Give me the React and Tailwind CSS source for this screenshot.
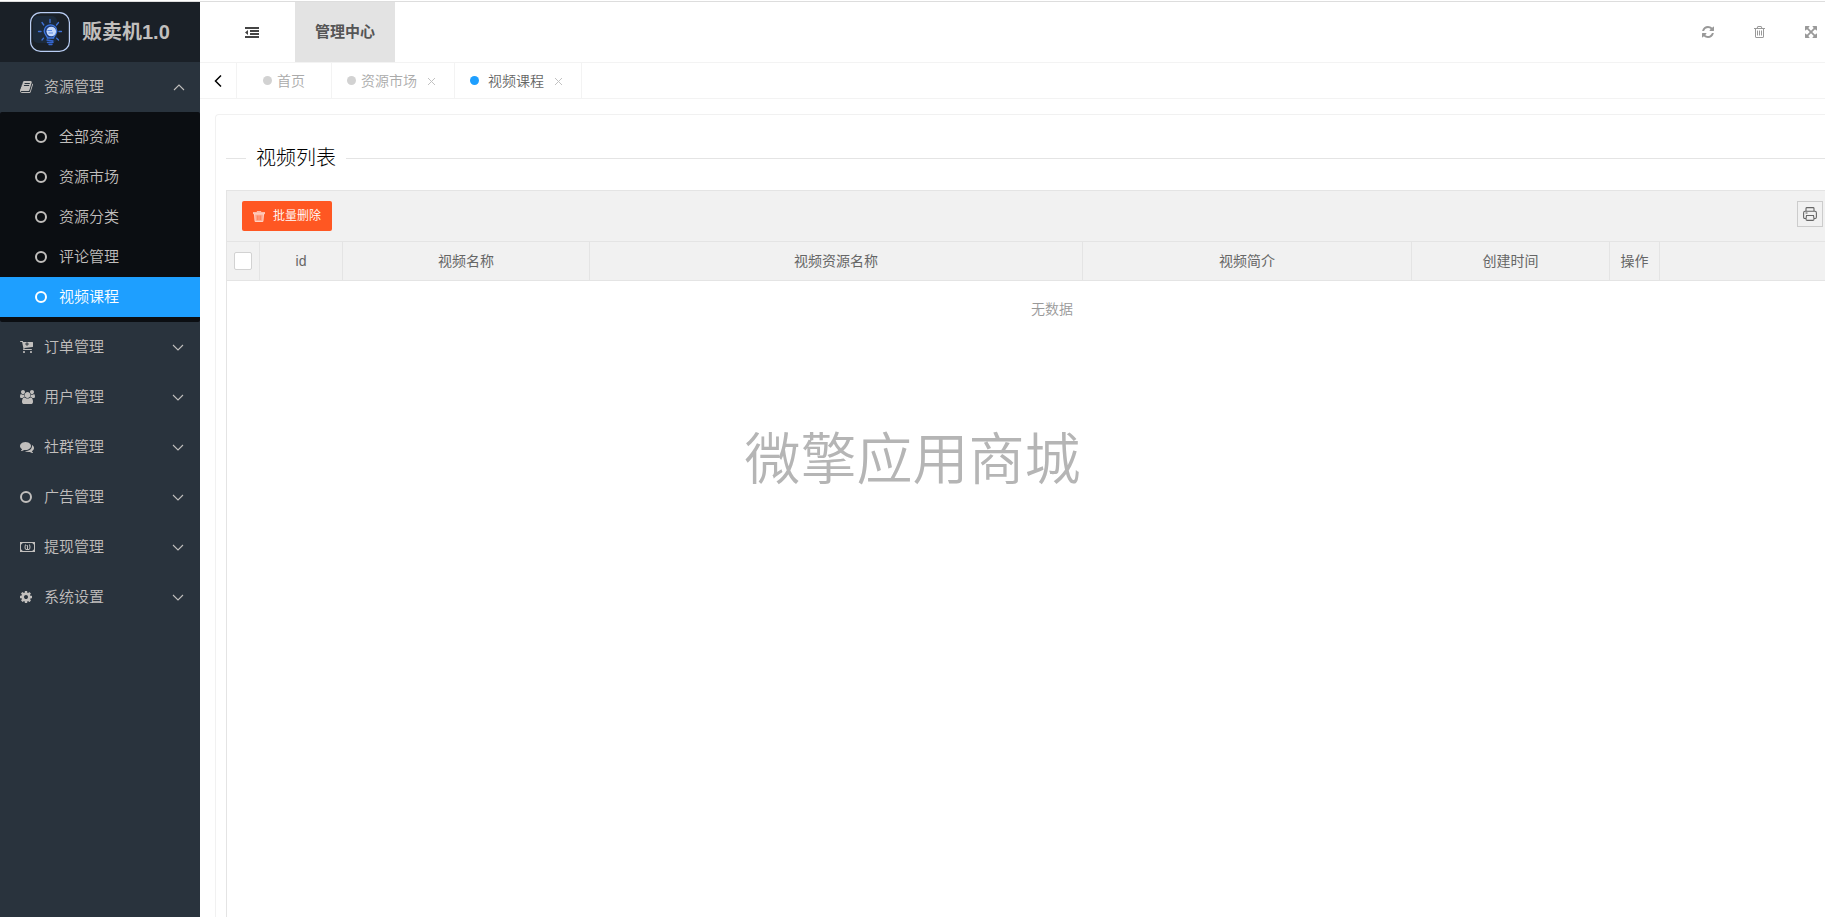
import React, { useState } from 'react';
import clsx from 'clsx';

const paths = {
  book: 'M1703 478q40 57 18 129l-275 906q-19 64-76.5 107.5t-122.5 43.5h-923q-77 0-148.5-53.5t-99.5-131.5q-24-67-2-127 0-4 3-27t4-37q1-8-3-21.5t-3-19.5q2-11 8-21t16.5-23.5 16.5-23.5q23-38 45-91.5t30-91.5q3-10 .5-30t-.5-28q3-11 17-28t17-23q21-36 42-92t25-90q1-9-2.5-32t.5-28q4-13 22-30.5t22-22.5q19-26 42.5-84.5t27.5-96.5q1-8-3-25.5t-2-26.5q2-8 9-18t18-23 17-21q8-12 16.5-30.5t15-35 16-36 19.5-32 26.5-23.5 36-11.5 47.5 5.5l-1 3q38-9 51-9h761q74 0 114 56t18 130l-274 906q-36 119-71.5 153.5t-128.5 34.5h-869q-27 0-38 15-11 16-1 43 24 70 144 70h923q29 0 56-15.5t35-41.5l300-987q7-22 5-57 38 15 59 43zm-1064 2q-4 13 2 22.5t20 9.5h608q13 0 25.5-9.5t16.5-22.5l21-64q4-13-2-22.5t-20-9.5h-608q-13 0-25.5 9.5t-16.5 22.5zm-83 256q-4 13 2 22.5t20 9.5h608q13 0 25.5-9.5t16.5-22.5l21-64q4-13-2-22.5t-20-9.5h-608q-13 0-25.5 9.5t-16.5 22.5z',
  cart: 'M1216 576q0-26-19-45t-45-19h-128v-128q0-26-19-45t-45-19-45 19-19 45v128h-128q-26 0-45 19t-19 45 19 45 45 19h128v128q0 26 19 45t45 19 45-19 19-45v-128h128q26 0 45-19t19-45zm-512 1024q0 53-37.5 90.5t-90.5 37.5-90.5-37.5-37.5-90.5 37.5-90.5 90.5-37.5 90.5 37.5 37.5 90.5zm896 0q0 53-37.5 90.5t-90.5 37.5-90.5-37.5-37.5-90.5 37.5-90.5 90.5-37.5 90.5 37.5 37.5 90.5zm128-1216v512q0 24-16 42.5t-41 21.5l-1044 122q1 7 4.5 21.5t6 26.5 2.5 22q0 16-24 64h920q26 0 45 19t19 45-19 45-45 19h-1024q-26 0-45-19t-19-45q0-14 11-39.5t29.5-59.5 20.5-38l-177-823h-204q-26 0-45-19t-19-45 19-45 45-19h256q16 0 28.5 6.5t20 15.5 13 24.5 7.5 26.5 5.5 29.5 4.5 25.5h1201q26 0 45 19t19 45z',
  users: 'M657 896q-162 5-265 128h-134q-82 0-138-40.5t-56-118.5q0-353 124-353 6 0 43.5 21t97.5 42.5 119 21.5q67 0 133-23-5 37-5 66 0 139 81 256zm1071 637q0 120-73 189.5t-194 69.5h-874q-121 0-194-69.5t-73-189.5q0-53 3.5-103.5t14-109 26.5-108.5 43-97.5 62-81 85.5-53.5 111.5-20q10 0 43 21.5t73 48 107 48 135 21.5 135-21.5 107-48 73-48 43-21.5q61 0 111.5 20t85.5 53.5 62 81 43 97.5 26.5 108.5 14 109 3.5 103.5zm-1024-1277q0 106-75 181t-181 75-181-75-75-181 75-181 181-75 181 75 75 181zm704 384q0 159-112.5 271.5t-271.5 112.5-271.5-112.5-112.5-271.5 112.5-271.5 271.5-112.5 271.5 112.5 112.5 271.5zm576 225q0 78-56 118.5t-138 40.5h-134q-103-123-265-128 81-117 81-256 0-29-5-66 66 23 133 23 59 0 119-21.5t97.5-42.5 43.5-21q124 0 124 353zm-128-609q0 106-75 181t-181 75-181-75-75-181 75-181 181-75 181 75 75 181z',
  comments: 'M1408 768q0 139-94 257t-256.5 186.5-353.5 68.5q-86 0-176-16-124 88-278 128-36 9-86 16h-3q-11 0-20.5-8t-11.5-21q-1-3-1-6.5t.5-6.5 2-6l2.5-5 3.5-5.5 4-5 4.5-5 4-4.5q5-6 23-25t26-29.5 22.5-29 25-38.5 20.5-44q-124-72-195-177t-71-224q0-139 94-257t256.5-186.5 353.5-68.5 353.5 68.5 256.5 186.5 94 257zm384 256q0 120-71 224.5t-195 176.5q10 24 20.5 44t25 38.5 22.5 29 26 29.5 23 25q1 1 4 4.5t4.5 5 4 5 3.5 5.5l2.5 5 2 6 .5 6.5-1 6.5q-3 14-13 22t-22 7q-50-7-86-16-154-40-278-128-90 16-176 16-271 0-472-132 58 4 88 4 161 0 309-45t264-129q125-92 192-212t67-254q0-77-23-152 129 71 204 178t75 230z',
  cog: 'M1152 896q0-106-75-181t-181-75-181 75-75 181 75 181 181 75 181-75 75-181zm512-109v222q0 12-8 23t-20 13l-185 28q-19 54-39 91 35 50 107 138 10 12 10 25t-9 23q-27 37-99 108t-94 71q-12 0-26-9l-138-108q-44 23-91 38-16 136-29 186-7 28-36 28h-222q-14 0-24.5-8.5t-11.5-21.5l-28-184q-49-16-90-37l-141 107q-10 9-25 9-14 0-25-11-126-114-165-168-7-10-7-23 0-12 8-23 15-21 51-66.5t54-70.5q-27-50-41-99l-183-27q-13-2-21-12.5t-8-23.5v-222q0-12 8-23t19-13l186-28q14-46 39-92-40-57-107-138-10-12-10-24 0-10 9-23 26-36 98.5-107.5t94.5-71.5q13 0 26 10l138 107q44-23 91-38 16-136 29-186 7-28 36-28h222q14 0 24.5 8.5t11.5 21.5l28 184q49 16 90 37l142-107q9-9 24-9 13 0 25 10 129 119 165 170 7 8 7 22 0 12-8 23-15 21-51 66.5t-54 70.5q26 50 41 98l183 28q13 2 21 12.5t8 23.5z',
  refresh: 'M1639 1056q0 5-1 7-64 268-268 434.5t-478 166.5q-146 0-282.5-55t-243.5-157l-129 129q-19 19-45 19t-45-19-19-45v-448q0-26 19-45t45-19h448q26 0 45 19t19 45-19 45l-137 137q71 66 161 102t187 36q134 0 250-65t186-179q11-17 53-117 8-23 30-23h192q13 0 22.5 9.5t9.5 22.5zm25-800v448q0 26-19 45t-45 19h-448q-26 0-45-19t-19-45 19-45l138-138q-148-137-349-137-134 0-250 65t-186 179q-11 17-53 117-8 23-30 23h-199q-13 0-22.5-9.5t-9.5-22.5v-7q65-268 270-434.5t480-166.5q146 0 284 55.5t245 156.5l130-129q19-19 45-19t45 19 19 45z',
  trash: 'M704 736v576q0 14-9 23t-23 9h-64q-14 0-23-9t-9-23v-576q0-14 9-23t23-9h64q14 0 23 9t9 23zm256 0v576q0 14-9 23t-23 9h-64q-14 0-23-9t-9-23v-576q0-14 9-23t23-9h64q14 0 23 9t9 23zm256 0v576q0 14-9 23t-23 9h-64q-14 0-23-9t-9-23v-576q0-14 9-23t23-9h64q14 0 23 9t9 23zm128 724v-948h-896v948q0 22 7 40.5t14.5 27 10.5 8.5h832q3 0 10.5-8.5t14.5-27 7-40.5zm-672-1076h448l-48-117q-7-9-17-11h-317q-10 2-17 11zm928 32v64q0 14-9 23t-23 9h-96v948q0 83-47 143.5t-113 60.5h-832q-66 0-113-58.5t-47-141.5v-952h-96q-14 0-23-9t-9-23v-64q0-14 9-23t23-9h309l70-167q15-37 54-63t79-26h320q40 0 79 26t54 63l70 167h309q14 0 23 9t9 23z',
  expand: 'M1411 541l-355 355 355 355 144-144q29-31 70-14 39 17 39 59v448q0 26-19 45t-45 19h-448q-42 0-59-40-17-39 14-69l144-144-355-355-355 355 144 144q31 30 14 69-17 40-59 40h-448q-26 0-45-19t-19-45v-448q0-42 40-59 39-17 69 14l144 144 355-355-355-355-144 144q-19 19-45 19-12 0-24-5-40-17-40-59v-448q0-26 19-45t45-19h448q42 0 59 40 17 39-14 69l-144 144 355 355 355-355-144-144q-31-30-14-69 17-40 59-40h448q26 0 45 19t19 45v448q0 42-39 59-13 5-25 5-26 0-45-19z',
};

// viewBox trims the side bearings so the glyph fills its box
const Glyph = ({ name, viewBox = '128 128 1536 1536', className }) => (
  <svg viewBox={viewBox} className={className} fill="currentColor" fillRule="evenodd" aria-hidden="true">
    <path d={paths[name]} />
  </svg>
);

const Ring = ({ className = 'w-3 h-3' }) => (
  <svg viewBox="0 0 12 12" className={className} fill="none" stroke="currentColor" strokeWidth="2" aria-hidden="true">
    <circle cx="6" cy="6" r="5" />
  </svg>
);

const Money = () => (
  <svg viewBox="0 0 15 10" className="w-[15px] h-[10px]" fill="none" stroke="currentColor" aria-hidden="true">
    <rect x="0.5" y="0.5" width="14" height="9" />
    <path d="M1 1h1.800L1 2.800zM14 1v1.800L12.200 1zM1 9V7.200L2.800 9zM14 9h-1.800L14 7.200z" fill="currentColor" stroke="none" />
    <path d="M5.500 2.500Q4.500 5 5.500 7.500M9.500 2.500Q10.500 5 9.500 7.500" />
    <path d="M6.500 3.500h1V7M6 7.500h3" />
  </svg>
);

const Arrow = ({ up }) => (
  <svg viewBox="0 0 12 7" className="w-3 h-[7px]" fill="none" stroke="currentColor" strokeWidth="1.1" aria-hidden="true">
    <path d={up ? 'M1 6l5-5 5 5' : 'M1 1l5 5 5-5'} />
  </svg>
);

const Logo = () => (
  <svg viewBox="0 0 40 40" className="w-10 h-10" fill="none" aria-hidden="true">
    <rect x="3" y="4" width="24" height="27" rx="5" fill="#1c2a3b" />
    <rect x="0.6" y="0.6" width="38.8" height="38.8" rx="10" stroke="#b9cdf3" strokeWidth="1.2" />
    <g stroke="#3f72d8" strokeWidth="1.3" strokeLinecap="round">
      <path d="M20 7.500v3M12 10.500l1.800 2.500M28.500 10.500l-2 2.500M8.500 19.500h2.500M29 19.500h2.500M12 28l1.500-1.800M28.500 28l-1.800-1.800" />
    </g>
    <path d="M17.500 26c0-2-3.300-3.200-3.300-6.900a6.300 6.300 0 0 1 12.600 0c0 3.700-3.300 4.900-3.300 6.900z" fill="#1d3a78" stroke="#3f78e0" strokeWidth="1.3" />
    <circle cx="21.300" cy="19.500" r="4.800" fill="#c3d8fb" />
    <path d="M17.500 18.500h4.500M18.500 21h4.500" stroke="#5d8ae6" />
    <path d="M17 28l6 1M17.500 30.500h5.500M19 32.500h3" stroke="#3566cf" strokeWidth="1.4" strokeLinecap="round" />
  </svg>
);

const Outdent = () => (
  <svg viewBox="0 0 14 11" className="w-[14px] h-[11px]" fill="currentColor" aria-hidden="true">
    <path d="M0 0h14v2H0zM5 3h9v2H5zM5 6h9v2H5zM0 9h14v2H0zM3 3v5L0 5.500z" />
  </svg>
);

const Printer = () => (
  <svg viewBox="0 0 14 14" className="w-[14px] h-[14px]" fill="none" stroke="currentColor" strokeWidth="1.1" aria-hidden="true">
    <path d="M3 4V1.500Q3 .6 4 .6h6q1 0 1 .9V4M3 11.500H1.800Q.6 11.500.6 10V6Q.6 4.200 2 4.200h10q1.400 0 1.400 1.800v4q0 1.500-1.200 1.500H11" />
    <path d="M3.500 8.500h7L11 12q0 1.400-1.200 1.400H4.200Q3 13.400 3 12z" />
    <path d="M2.500 6h2" />
  </svg>
);

const TrashFill = () => (
  <svg viewBox="0 0 12 11" className="w-3 h-[11px]" fill="none" aria-hidden="true">
    <path d="M4 1V.5h4V1M0 1.500h12v1.300H0z" fill="#ffd3c5" stroke="#ffd3c5" strokeWidth="0.6" />
    <path d="M1.500 3h9l-.6 7.500H2.100z" fill="#ffab91" stroke="#ffd3c5" />
    <path d="M4.300 4.500v4.500M6 4.500v4.500M7.700 4.500v4.500" stroke="#ff6c3e" strokeWidth="0.7" />
  </svg>
);

const Close = () => (
  <svg viewBox="0 0 9 9" className="w-[9px] h-[9px]" fill="none" stroke="currentColor" aria-hidden="true">
    <path d="M1 1l7 7M8 1L1 8" />
  </svg>
);

const subItems = ['全部资源', '资源市场', '资源分类', '评论管理', '视频课程'];

const menus = [
  { name: '订单管理', icon: <Glyph name="cart" viewBox="64 192 1664 1536" className="w-[13px] h-3" /> },
  { name: '用户管理', icon: <Glyph name="users" viewBox="64 0 1920 1792" className="w-[15px] h-[14px]" /> },
  { name: '社群管理', icon: <Glyph name="comments" viewBox="0 256 1792 1408" className="w-[14px] h-[11px]" /> },
  { name: '广告管理', icon: <Ring /> },
  { name: '提现管理', icon: <Money /> },
  { name: '系统设置', icon: <Glyph name="cog" className="w-3 h-3" /> },
];

const columns = ['id', '视频名称', '视频资源名称', '视频简介', '创建时间', '操作'];

const Sidebar = () => {
  const [active, setActive] = useState('视频课程');

  return (
    <aside className="w-[200px] shrink-0 bg-[#29333d] text-[#c1bfbd] text-[15px]">
      <a href="#home" className="flex items-center h-[60px] pl-[30px] gap-3 bg-[#1a2027]">
        <Logo />
        <span className="text-[20px] font-bold">贩卖机1.0</span>
      </a>
      <nav>
        <button className="flex items-center w-full h-[50px] pl-5 pr-[15px]">
          <span className="w-6">
            <Glyph name="book" viewBox="64 128 1664 1536" className="w-[13px] h-3" />
          </span>
          <span className="flex-1 text-left">资源管理</span>
          <Arrow up />
        </button>
        <ul className="py-[5px] bg-[#0b0e12] rounded-xs">
          {subItems.map((item) => (
            <li key={item}>
              <a
                href="#video"
                onClick={() => setActive(item)}
                className={clsx(
                  'flex items-center h-10 pl-[35px] gap-3',
                  active === item && 'bg-[#1e9fff] text-white'
                )}
              >
                <Ring />
                {item}
              </a>
            </li>
          ))}
        </ul>
        {menus.map((menu) => (
          <button key={menu.name} className="flex items-center w-full h-[50px] pl-5 pr-4">
            <span className="w-6">{menu.icon}</span>
            <span className="flex-1 text-left">{menu.name}</span>
            <Arrow />
          </button>
        ))}
      </nav>
    </aside>
  );
};

const Header = () => (
  <header className="flex items-center h-[60px] text-[#999]">
    <button className="flex items-center justify-center w-[95px] h-full pl-2 text-[#444]" aria-label="收起菜单">
      <Outdent />
    </button>
    <a href="#center" className="flex items-center justify-center w-[100px] h-full bg-[#e3e3e3] text-[#555] text-[15px] font-bold">
      管理中心
    </a>
    <div className="flex items-center gap-10 ml-auto pr-2">
      <button aria-label="刷新"><Glyph name="refresh" className="w-3 h-3" /></button>
      <button aria-label="清除缓存"><Glyph name="trash" viewBox="192 128 1408 1536" className="w-[11px] h-3" /></button>
      <button aria-label="全屏"><Glyph name="expand" className="w-3 h-3" /></button>
    </div>
  </header>
);

const Tabs = () => (
  <div className="flex h-[37px] border-y border-[#f3f3f3] text-sm text-[#aaa]">
    <button className="flex items-center justify-center w-[37px] border-r border-[#f3f3f3] text-black" aria-label="向左">
      <svg viewBox="0 0 8 12" className="w-2 h-3" fill="none" stroke="currentColor" strokeWidth="1.5">
        <path d="M7 .5L1.500 6 7 11.500" />
      </svg>
    </button>
    <a href="#home" className="flex items-center gap-[5px] px-[26px] border-r border-[#f3f3f3]">
      <span className="w-[9px] h-[9px] rounded-full bg-[#d2d2d2]" />
      首页
    </a>
    <div className="flex items-center gap-[10px] pl-[15px] pr-[18px] border-r border-[#f3f3f3]">
      <a href="#market" className="flex items-center gap-[5px]">
        <span className="w-[9px] h-[9px] rounded-full bg-[#d2d2d2]" />
        资源市场
      </a>
      <button className="pt-[2px] text-[#c2c2c2]" aria-label="关闭资源市场"><Close /></button>
    </div>
    <div className="flex items-center gap-[10px] pl-[15px] pr-[18px] border-r border-[#f3f3f3]">
      <a href="#video" className="flex items-center gap-[9px] text-[#666]">
        <span className="w-[9px] h-[9px] rounded-full bg-[#1e9fff]" />
        视频课程
      </a>
      <button className="pt-[2px] text-[#c2c2c2]" aria-label="关闭视频课程"><Close /></button>
    </div>
  </div>
);

const VideoTable = () => (
  <div className="flex-1 border-l border-t border-[#e4e4e4] text-sm text-[#666]">
    <div className="flex items-start justify-between h-[50px] pt-[10px] pl-[15px] pr-[2px] bg-[#f1f1f1]">
      <button className="flex items-center justify-center gap-2 w-[90px] h-[30px] bg-[#ff5722] text-white text-xs rounded-xs">
        <TrashFill />
        批量删除
      </button>
      <button className="flex items-center justify-center w-[26px] h-[26px] border border-[#ccc]" aria-label="打印">
        <Printer />
      </button>
    </div>
    <table className="w-full table-fixed border-separate border-spacing-0">
      <colgroup>
        <col className="w-[33px]" />
        <col className="w-[83px]" />
        <col className="w-[247px]" />
        <col className="w-[493px]" />
        <col className="w-[329px]" />
        <col className="w-[198px]" />
        <col className="w-[50px]" />
        <col />
      </colgroup>
      <thead>
        <tr className="h-10 bg-[#f1f1f1]">
          <th className="border-y border-r border-[#e4e4e4] p-0">
            <input
              type="checkbox"
              aria-label="全选"
              className="block mx-auto w-[18px] h-[18px] appearance-none bg-white border border-[#d2d2d2] rounded-xs checked:bg-[#1e9fff]"
            />
          </th>
          {columns.map((col) => (
            <th key={col} className="border-y border-r border-[#e4e4e4] p-0 font-normal">{col}</th>
          ))}
          <td className="border-y border-[#e4e4e4] p-0" />
        </tr>
      </thead>
      <tbody>
        <tr>
          <td colSpan={8} className="h-14 p-0 pl-[52px] text-center text-[#999]">无数据</td>
        </tr>
      </tbody>
    </table>
  </div>
);

const App = () => (
  <div className="flex flex-col min-h-screen bg-white font-['Liberation_Sans','Noto_Sans_CJK_SC',sans-serif] font-[350]">
    <div className="h-[2px] border-b border-[#ddd]" />
    <div className="flex flex-1">
      <Sidebar />
      <main className="relative flex flex-col flex-1 min-w-0">
        <Header />
        <Tabs />
        <section className="flex flex-col flex-1 mt-[15px] ml-[15px] pt-7 pl-[10px] border-l border-t border-[#f1f1f1] rounded-tl">
          <div className="flex items-center gap-[10px] mb-[17px]">
            <span className="w-5 h-px bg-[#e4e4e4]" />
            <h1 className="text-[20px] leading-[30px] font-light text-black">视频列表</h1>
            <span className="flex-1 h-px bg-[#e4e4e4]" />
          </div>
          <VideoTable />
        </section>
        <div className="absolute inset-x-0 top-1/2 flex justify-center -translate-y-1/2 pr-[200px] text-[56px] leading-[64px] font-[350] text-[#b5b5b5] pointer-events-none">
          微擎应用商城
        </div>
      </main>
    </div>
  </div>
);

export default App;
